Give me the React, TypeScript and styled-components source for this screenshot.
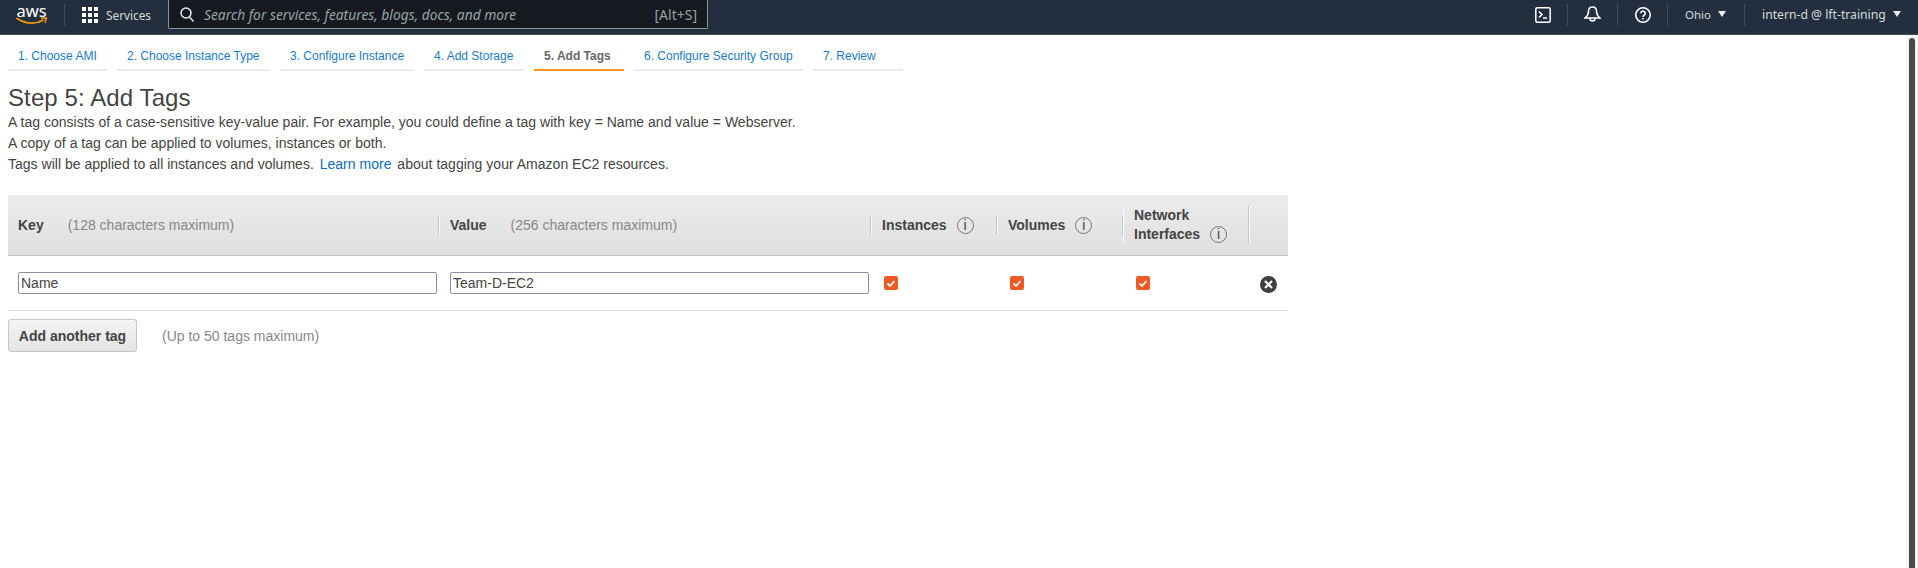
import React from 'react';
import styled, { createGlobalStyle } from 'styled-components';

const Global = createGlobalStyle`
  html, body { margin: 0; padding: 0; height: 100%; background: #fff; overflow: hidden; }
  #root { height: 100%; }
  * { box-sizing: border-box; }
`;

const Page = styled.div`
  height: 568px;
  display: flex;
  flex-direction: column;
  font-family: "Liberation Sans", Arial, sans-serif;
  color: #444;
  font-size: 14px;
`;

const Nav = styled.header`
  height: 35px;
  flex: none;
  background: #232f3e;
  border-bottom: 1px solid #414d5c;
  padding-bottom: 5px;
  display: flex;
  align-items: center;
  font-family: "Noto Sans", sans-serif;
  font-size: 12px;
  color: #d5dbdb;
`;

const LogoSlot = styled.div`
  width: 64px;
  padding-left: 16px;
  display: flex;
  flex-direction: column;
  align-items: flex-start;
`;

const LogoWord = styled.span`
  width: 31px;
  text-align: center;
  font-size: 16.5px;
  line-height: 14px;
  height: 14px;
  color: #fff;
`;

const LogoSmile = styled.svg`
  display: block;
  width: 32px;
  height: 9px;
  margin-top: -1px;
`;

const NavDivider = styled.span`
  width: 1px;
  height: 22px;
  flex: none;
  background: #414d5c;
`;

const ServicesBtn = styled.div`
  display: flex;
  align-items: center;
  gap: 8px;
  padding-left: 17px;
  width: 103px;
  font-size: 11.8px;
`;

const SearchBox = styled.div`
  width: 540px;
  height: 29px;
  flex: none;
  align-self: flex-start;
  background: #16191f;
  border: 1px solid #879596;
  border-top: none;
  border-radius: 0 0 2px 2px;
  display: flex;
  align-items: center;
  padding: 0 10px 0 11px;
  gap: 10px;
  color: #95a5a6;
`;

const SearchHint = styled.span`
  flex: 1;
  font-style: italic;
  font-size: 13.8px;
  white-space: nowrap;
`;

const Shortcut = styled.span`
  font-size: 14px;
`;

const NavRight = styled.div`
  margin-left: auto;
  display: flex;
  align-items: center;
`;

const IconCell = styled.div`
  width: 49px;
  display: flex;
  justify-content: center;
  align-items: center;
`;

const MenuCell = styled.div<{ $w: number; $size: number }>`
  width: ${p => p.$w}px;
  padding-left: 17px;
  display: flex;
  align-items: center;
  gap: 7px;
  white-space: nowrap;
  font-size: ${p => p.$size}px;
`;

const Caret = styled.span`
  width: 0;
  height: 0;
  margin-top: -2px;
  border-left: 4px solid transparent;
  border-right: 4px solid transparent;
  border-top: 6px solid #eaeded;
`;

const Body = styled.div`
  flex: 1;
  display: flex;
  min-height: 0;
`;

const Main = styled.main`
  flex: 1;
  padding: 0 8px;
`;

const Steps = styled.ol`
  list-style: none;
  display: flex;
  gap: 10px;
  margin: 0;
  padding: 12px 0 0;
`;

const Step = styled.li<{ $active?: boolean; $w: number }>`
  width: ${p => p.$w}px;
  height: 24px;
  padding: 0 10px;
  font-size: 12px;
  line-height: 19px;
  white-space: nowrap;
  color: ${p => (p.$active ? '#666' : '#1a7bc4')};
  font-weight: ${p => (p.$active ? 700 : 400)};
  border-bottom: 2px solid ${p => (p.$active ? '#f7981d' : '#eaeded')};
`;

const Title = styled.h1`
  margin: 12px 0 0;
  font-size: 24px;
  line-height: 29px;
  font-weight: 400;
  letter-spacing: 0.1px;
  color: #444;
`;

const Para = styled.p`
  margin: 0;
  font-size: 14px;
  line-height: 21px;
  letter-spacing: 0.015px;
  color: #444;
`;

const Link = styled.a`
  color: #0f6cbd;
  margin: 0 2px;
`;

const Table = styled.div`
  margin-top: 20px;
  width: 1280px;
`;

const Cols = `grid-template-columns: 432px 432px 126px 126px 126px 38px;`;

const HeadRow = styled.div`
  display: grid;
  ${Cols}
  height: 61px;
  background: linear-gradient(#ececec, #dfdfdf);
  border-bottom: 1px solid #c6c6c6;
  align-items: center;
`;

const HeadCell = styled.div`
  position: relative;
  height: 100%;
  display: flex;
  align-items: center;
  padding-left: 10px;
  font-size: 14px;
  font-weight: 700;
  line-height: 19px;
  color: #444;
`;

const Sep = styled.span<{ $tall?: boolean; $white?: boolean }>`
  position: absolute;
  right: ${p => (p.$white ? 0 : 1)}px;
  top: ${p => (p.$tall ? 11 : 21)}px;
  height: ${p => (p.$tall ? 38 : 19)}px;
  width: 1px;
  background: ${p => (p.$white ? '#fbfbfb' : '#c8c8c8')};
  box-shadow: ${p => (p.$white ? 'none' : '1px 0 0 #f6f6f6')};
`;

const Hint = styled.span`
  font-weight: 400;
  color: #888;
  margin-left: 24px;
  white-space: nowrap;
`;

const InfoMark = styled.span`
  display: inline-flex;
  align-items: center;
  justify-content: center;
  width: 17px;
  height: 17px;
  flex: none;
  border: 1px solid #777;
  border-radius: 50%;
  font-weight: 400;
  font-size: 14px;
  color: #444;
  margin-left: 10px;
`;

const HeadWrap = styled.span`
  display: block;
`;

const HeadLine = styled.span`
  display: flex;
  align-items: center;
`;

const BodyRow = styled.div`
  display: grid;
  ${Cols}
  height: 55px;
  border-bottom: 1px solid #dedede;
  align-items: start;
`;

const InputCell = styled.div`
  padding: 16px 0 0 10px;
`;

const TagInput = styled.input`
  display: block;
  width: 419px;
  height: 22px;
  padding: 0 2px;
  border: 1px solid #8c8ca6;
  border-radius: 2px;
  font-family: "Liberation Sans", Arial, sans-serif;
  font-size: 14px;
  color: #444;
  background: #fff;
  outline: none;
`;

const CheckCell = styled.div`
  padding: 20px 0 0 12px;
  display: flex;
`;

const Check = styled.svg`
  width: 14px;
  height: 14px;
  display: block;
`;

const RemoveCell = styled.div`
  padding: 20px 0 0 10px;
`;

const RemoveIcon = styled.svg`
  width: 17px;
  height: 17px;
  display: block;
`;

const Footer = styled.div`
  margin-top: 8px;
  display: flex;
  align-items: center;
`;

const AddBtn = styled.button`
  width: 129px;
  height: 33px;
  padding: 0;
  border: 1px solid #c6c6c6;
  border-radius: 3px;
  background: linear-gradient(#f4f4f4, #e4e4e4);
  font-family: "Liberation Sans", Arial, sans-serif;
  font-size: 14px;
  font-weight: 700;
  color: #444;
`;

const FootNote = styled.span`
  margin-left: 25px;
  color: #888;
  font-size: 14px;
`;

const ScrollTrack = styled.div`
  width: 12px;
  flex: none;
  background: #f5f5f5;
  padding: 3px 3px 0;
  display: flex;
`;

const ScrollThumb = styled.div`
  width: 6px;
  border-radius: 3px 3px 0 0;
  background: #4a4a4a;
`;

const steps: [string, number][] = [
  ['1. Choose AMI', 99],
  ['2. Choose Instance Type', 153],
  ['3. Configure Instance', 134],
  ['4. Add Storage', 100],
  ['5. Add Tags', 90],
  ['6. Configure Security Group', 169],
  ['7. Review', 90],
];

const AwsLogo = () => (
  <LogoSlot>
    <LogoWord>aws</LogoWord>
    <LogoSmile viewBox="0 0 32 9">
      <path d="M1 1.500c8 5.500 19 6 26 1.800" fill="none" stroke="#ff9900" strokeWidth="1.600" strokeLinecap="round" />
      <path d="M25.500 1.300l5-.3-1.400 4.200" fill="none" stroke="#ff9900" strokeWidth="1.500" strokeLinecap="round" strokeLinejoin="round" />
    </LogoSmile>
  </LogoSlot>
);

const Grid = () => (
  <svg width="16" height="16" viewBox="0 0 16 16" fill="#fff">
    {[0, 6, 12].flatMap(y => [0, 6, 12].map(x => <rect key={`${x}-${y}`} x={x} y={y} width="4" height="4" />))}
  </svg>
);

const Info = () => <InfoMark>i</InfoMark>;

const CheckMark = () => (
  <Check viewBox="0 0 14 14">
    <rect width="14" height="14" rx="2" fill="#ef5a24" />
    <path d="M3.500 7.500l2.500 2.500 4.500-5" fill="none" stroke="#fff" strokeWidth="1.800" />
  </Check>
);

export default function App() {
  return (
    <Page>
      <Global />
      <Nav>
        <AwsLogo />
        <NavDivider />
        <ServicesBtn><Grid />Services</ServicesBtn>
        <SearchBox>
          <svg width="14" height="15" viewBox="0 0 14 15" fill="none" stroke="#eaeded" strokeWidth="1.500">
            <circle cx="6" cy="6" r="5" /><path d="M9.500 10l4 4.500" />
          </svg>
          <SearchHint>Search for services, features, blogs, docs, and more</SearchHint>
          <Shortcut>[Alt+S]</Shortcut>
        </SearchBox>
        <NavRight>
          <IconCell>
            <svg width="16" height="16" viewBox="0 0 16 16" fill="none" stroke="#fff" strokeWidth="1.500">
              <rect x=".8" y=".8" width="14.400" height="14.400" rx="1.500" /><path d="M4 4.500L7 7.500 4 10.500M8 11h4" />
            </svg>
          </IconCell>
          <NavDivider />
          <IconCell>
            <svg width="17" height="17" viewBox="0 0 17 17" fill="none" stroke="#fff" strokeWidth="1.500">
              <path d="M8.500 1C6 1 4.500 3 4.500 5.500c0 3-1 4.500-3.500 6.500h15c-2.500-2-3.500-3.500-3.500-6.500C12.500 3 11 1 8.500 1zM6 12.500a2.500 2.500 0 0 0 5 0" />
            </svg>
          </IconCell>
          <NavDivider />
          <IconCell>
            <svg width="16" height="16" viewBox="0 0 16 16" fill="none" stroke="#fff" strokeWidth="1.600">
              <circle cx="8" cy="8" r="7.200" /><path d="M5.800 6.200a2.200 2.200 0 1 1 3.400 1.900c-.8.5-1.200.9-1.200 1.900" /><path d="M8 11v1.500" />
            </svg>
          </IconCell>
          <NavDivider />
          <MenuCell $w={76} $size={11.5}>Ohio<Caret /></MenuCell>
          <NavDivider />
          <MenuCell $w={173} $size={12.2}>intern-d @ lft-training<Caret /></MenuCell>
        </NavRight>
      </Nav>
      <Body>
        <Main>
          <Steps>
            {steps.map(([s, w], i) => (
              <Step key={s} $w={w} $active={i === 4}>{s}</Step>
            ))}
          </Steps>
          <Title>Step 5: Add Tags</Title>
          <Para>A tag consists of a case-sensitive key-value pair. For example, you could define a tag with key = Name and value = Webserver.</Para>
          <Para>A copy of a tag can be applied to volumes, instances or both.</Para>
          <Para>Tags will be applied to all instances and volumes. <Link>Learn more</Link> about tagging your Amazon EC2 resources.</Para>
          <Table>
            <HeadRow>
              <HeadCell>Key<Hint>(128 characters maximum)</Hint><Sep /></HeadCell>
              <HeadCell>Value<Hint>(256 characters maximum)</Hint><Sep /></HeadCell>
              <HeadCell>Instances<Info /><Sep /></HeadCell>
              <HeadCell>Volumes<Info /><Sep /><Sep $tall $white /></HeadCell>
              <HeadCell>
                <HeadWrap>Network<HeadLine>Interfaces<Info /></HeadLine></HeadWrap><Sep $tall />
              </HeadCell>
              <HeadCell />
            </HeadRow>
            <BodyRow>
              <InputCell><TagInput defaultValue="Name" /></InputCell>
              <InputCell><TagInput defaultValue="Team-D-EC2" /></InputCell>
              <CheckCell><CheckMark /></CheckCell>
              <CheckCell><CheckMark /></CheckCell>
              <CheckCell><CheckMark /></CheckCell>
              <RemoveCell>
                <RemoveIcon viewBox="0 0 17 17">
                  <circle cx="8.500" cy="8.500" r="8.500" fill="#3f3f3f" />
                  <path d="M5 5l7 7M12 5l-7 7" stroke="#fff" strokeWidth="2.200" />
                </RemoveIcon>
              </RemoveCell>
            </BodyRow>
            <Footer>
              <AddBtn>Add another tag</AddBtn>
              <FootNote>(Up to 50 tags maximum)</FootNote>
            </Footer>
          </Table>
        </Main>
        <ScrollTrack><ScrollThumb /></ScrollTrack>
      </Body>
    </Page>
  );
}
